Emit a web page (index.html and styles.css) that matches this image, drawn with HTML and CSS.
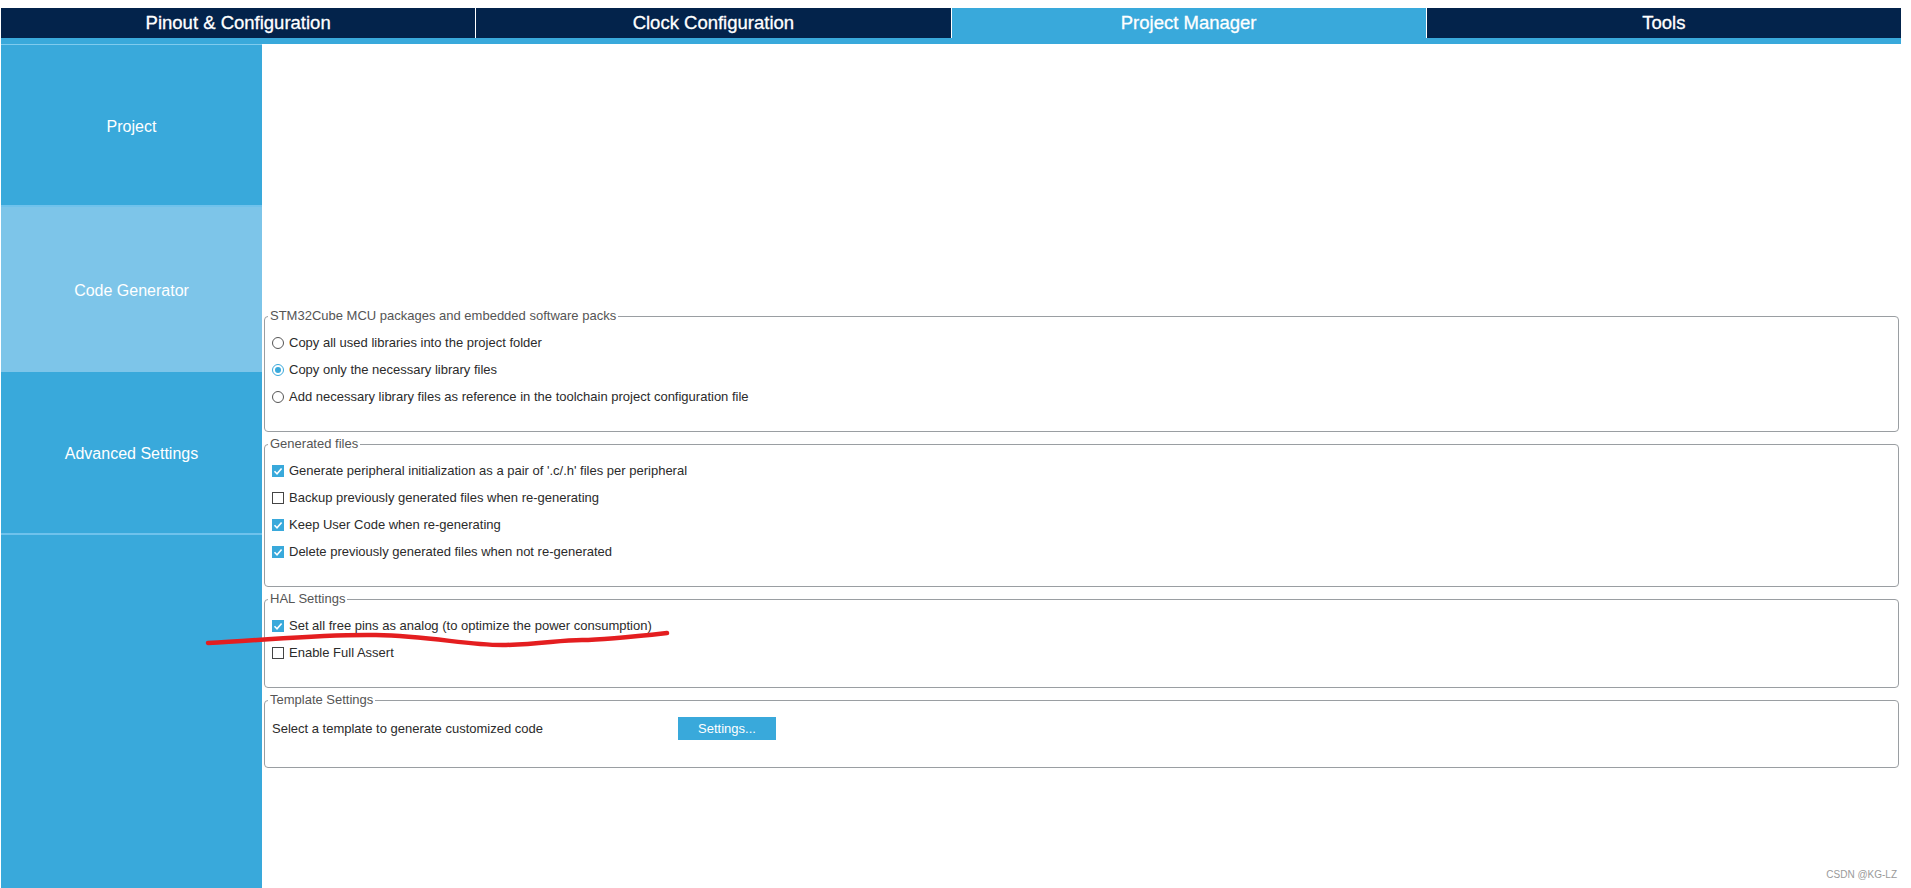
FILE: index.html
```html
<!DOCTYPE html>
<html lang="en">
<head>
  <meta charset="UTF-8">
  <title>Project Manager - Code Generator</title>
  <link rel="stylesheet" href="styles.css">
</head>
<body>
<div class="app">
  <nav class="tabs">
    <div class="tab">Pinout &amp; Configuration</div>
    <div class="tab">Clock Configuration</div>
    <div class="tab active">Project Manager</div>
    <div class="tab">Tools</div>
  </nav>
  <div class="strip"></div>

  <div class="main">
    <aside class="sidebar">
      <div class="side-item project">Project</div>
      <div class="side-item code active">Code Generator</div>
      <div class="side-item advanced">Advanced Settings</div>
    </aside>

    <section class="content">
      <fieldset class="group">
        <legend>STM32Cube MCU packages and embedded software packs</legend>
        <div class="opt"><span class="radio"></span>Copy all used libraries into the project folder</div>
        <div class="opt"><span class="radio on"></span>Copy only the necessary library files</div>
        <div class="opt"><span class="radio"></span>Add necessary library files as reference in the toolchain project configuration file</div>
      </fieldset>

      <fieldset class="group">
        <legend>Generated files</legend>
        <div class="opt"><span class="box on"><svg viewBox="0 0 12 12"><path d="M2.5 6.3 L5 8.8 L9.6 3.4" /></svg></span>Generate peripheral initialization as a pair of '.c/.h' files per peripheral</div>
        <div class="opt"><span class="box"></span>Backup previously generated files when re-generating</div>
        <div class="opt"><span class="box on"><svg viewBox="0 0 12 12"><path d="M2.5 6.3 L5 8.8 L9.6 3.4" /></svg></span>Keep User Code when re-generating</div>
        <div class="opt"><span class="box on"><svg viewBox="0 0 12 12"><path d="M2.5 6.3 L5 8.8 L9.6 3.4" /></svg></span>Delete previously generated files when not re-generated</div>
      </fieldset>

      <fieldset class="group">
        <legend>HAL Settings</legend>
        <div class="opt"><span class="box on"><svg viewBox="0 0 12 12"><path d="M2.5 6.3 L5 8.8 L9.6 3.4" /></svg></span>Set all free pins as analog (to optimize the power consumption)</div>
        <div class="opt"><span class="box"></span>Enable Full Assert</div>
      </fieldset>

      <fieldset class="group template">
        <legend>Template Settings</legend>
        <div class="tpl-row">
          <span class="tpl-label">Select a template to generate customized code</span>
          <button class="btn">Settings...</button>
        </div>
      </fieldset>
    </section>
  </div>

  <!-- red hand-drawn mark -->
  <svg class="mark" width="1911" height="888" viewBox="0 0 1911 888">
    <path d="M208 643 C 270 640, 320 634, 376 635 S 470 646, 506 645 S 560 640, 582 640 S 640 636, 667 633" />
  </svg>

  <div class="watermark">CSDN @KG-LZ</div>
</div>
</body>
</html>
```

FILE: styles.css
```css
html, body {
  margin: 0;
  padding: 0;
  background: #fff;
}
body {
  font-family: "Liberation Sans", Arial, sans-serif;
  height: 888px;
  overflow: hidden;
}
.app {
  position: relative;
  width: 1901px;
  height: 888px;
  padding: 8px 0 0 1px;
  box-sizing: border-box;
}

/* top tabs */
.tabs {
  display: flex;
  gap: 1px;
  height: 30px;
}
.tab {
  flex: 1;
  background: #03234b;
  color: #fff;
  font-size: 18.5px;
  -webkit-text-stroke: 0.3px #fff;
  display: flex;
  align-items: center;
  justify-content: center;
}
.tab.active {
  background: #39a9db;
}
.strip {
  height: 6px;
  background: #39a9db;
}

/* body */
.main {
  display: flex;
  height: 844px;
}
.sidebar {
  width: 261px;
  flex: none;
  background: #39a9db;
  border-top: 1px solid #7fcbee;
  box-sizing: border-box;
}
.side-item {
  display: flex;
  align-items: center;
  justify-content: center;
  box-sizing: border-box;
  padding-top: 3px;
  color: #fff;
  font-size: 16px;
}
.side-item.project {
  height: 162px;
  border-bottom: 2px solid #6fc2ec;
}
.side-item.code {
  height: 165px;
}
.side-item.active {
  background: #7dc5e9;
}
.side-item.advanced {
  height: 163px;
  border-bottom: 2px solid #6fc2ec;
}

.content {
  flex: 1;
  padding: 264px 2px 0 2px;
}
.group {
  margin: 0 0 4px 0;
  padding: 5px 7px 21px 7px;
  border: 1px solid #9a9ea2;
  border-radius: 4px;
  font-size: 13px;
  color: #2b2b2b;
}
.group legend {
  margin-left: -4px;
  padding: 0 2px;
  line-height: 16px;
  color: #555;
  font-size: 13px;
}
.group.template {
  margin-top: 4px;
  padding-bottom: 24px;
}
.opt {
  height: 27px;
  display: flex;
  align-items: center;
  gap: 5px;
}

.radio {
  width: 12px;
  height: 12px;
  box-sizing: border-box;
  border: 1px solid #555;
  border-radius: 50%;
  background: #fff;
  display: flex;
  align-items: center;
  justify-content: center;
}
.radio.on {
  border-color: #39a9db;
}
.radio.on::after {
  content: "";
  width: 6px;
  height: 6px;
  border-radius: 50%;
  background: #39a9db;
}
.box {
  width: 12px;
  height: 12px;
  box-sizing: border-box;
  border: 1px solid #444;
  background: #fff;
  display: flex;
}
.box.on {
  border: none;
  background: #39a9db;
}
.box svg {
  width: 12px;
  height: 12px;
}
.box svg path {
  fill: none;
  stroke: #fff;
  stroke-width: 1.6;
}

.tpl-row {
  height: 30px;
  display: flex;
  align-items: center;
}
.tpl-label {
  width: 406px;
}
.btn {
  width: 98px;
  height: 23px;
  border: none;
  background: #39a9db;
  color: #fff;
  font-family: "Liberation Sans", Arial, sans-serif;
  font-size: 13px;
  padding: 0;
}

.mark {
  position: absolute;
  left: 0;
  top: 0;
  pointer-events: none;
}
.mark path {
  fill: none;
  stroke: #e41e20;
  stroke-width: 4.5;
  stroke-linecap: round;
}
.watermark {
  position: absolute;
  right: 4px;
  bottom: 8px;
  font-size: 10px;
  color: #9a9a9a;
}
```
